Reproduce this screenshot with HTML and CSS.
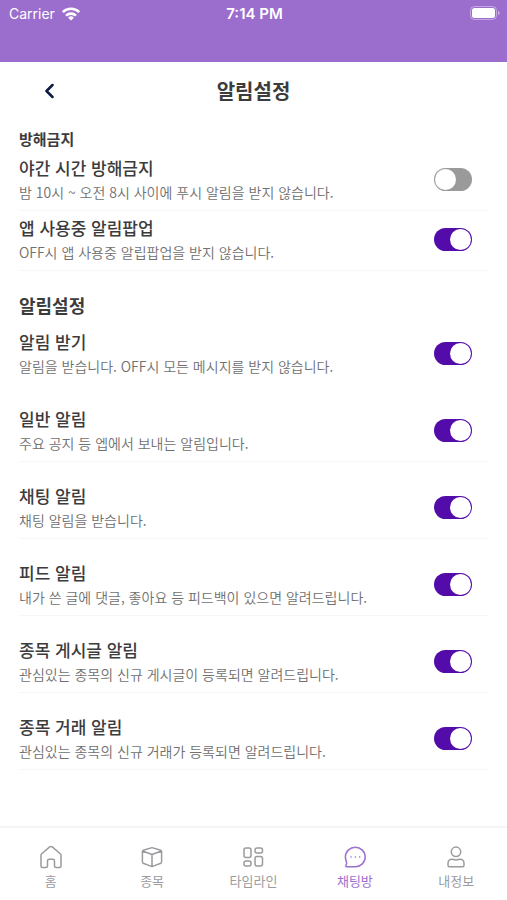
FILE: index.html
```html
<!DOCTYPE html>
<html lang="ko">
<head>
<meta charset="utf-8">
<meta name="viewport" content="width=device-width, initial-scale=1">
<title>알림설정</title>
<link rel="stylesheet" href="styles.css">
</head>
<body>
<div class="status-bar">
  <span class="carrier">Carrier
    <svg width="20" height="16" viewBox="0 0 20 16" fill="none" stroke="currentColor" stroke-width="2.6" aria-hidden="true"><path d="M1.8 6.2a11.6 11.6 0 0 1 16.4 0M5 9.7a7.1 7.1 0 0 1 10 0"/><path d="M10 14.6 7.1 11.7a4.1 4.1 0 0 1 5.8 0z" fill="currentColor" stroke="none"/></svg>
  </span>
  <span class="clock">7:14 PM</span>
  <svg class="battery" width="30" height="14" viewBox="0 0 30 14" aria-hidden="true"><rect x=".5" y=".5" width="26" height="13" rx="4" fill="none" stroke="#fff" stroke-opacity=".4"/><rect x="2" y="2" width="23" height="10" rx="2.5" fill="#fff"/><path d="M28 5v4c1-.4 1.600-1.100 1.600-2S29 5.400 28 5z" fill="#fff" fill-opacity=".5"/></svg>
</div>
<header class="header">
  <button class="back" type="button" aria-label="뒤로"><svg width="10" height="16" viewBox="0 0 10 16" fill="none" stroke="currentColor" stroke-width="2.500" stroke-linecap="round" stroke-linejoin="round"><path d="M8.500 2 2.500 8l6 6"/></svg></button>
  <h1>알림설정</h1>
</header>
<main class="settings">
  <section class="group compact">
    <h2>방해금지</h2>
    <div class="row"><label for="night">야간 시간 방해금지<small>밤 10시 ~ 오전 8시 사이에 푸시 알림을 받지 않습니다.</small></label><input class="toggle" id="night" type="checkbox"></div>
    <div class="row"><label for="popup">앱 사용중 알림팝업<small>OFF시 앱 사용중 알립팝업을 받지 않습니다.</small></label><input class="toggle" id="popup" type="checkbox" checked></div>
  </section>
  <section class="group">
    <h2>알림설정</h2>
    <div class="row master"><label for="all">알림 받기<small>알림을 받습니다. OFF시 모든 메시지를 받지 않습니다.</small></label><input class="toggle" id="all" type="checkbox" checked></div>
    <div class="row"><label for="general">일반 알림<small>주요 공지 등 엡에서 보내는 알림입니다.</small></label><input class="toggle" id="general" type="checkbox" checked></div>
    <div class="row"><label for="chat">채팅 알림<small>채팅 알림을 받습니다.</small></label><input class="toggle" id="chat" type="checkbox" checked></div>
    <div class="row"><label for="feed">피드 알림<small>내가 쓴 글에 댓글, 좋아요 등 피드백이 있으면 알려드립니다.</small></label><input class="toggle" id="feed" type="checkbox" checked></div>
    <div class="row"><label for="post">종목 게시글 알림<small>관심있는 종목의 신규 게시글이 등록되면 알려드립니다.</small></label><input class="toggle" id="post" type="checkbox" checked></div>
    <div class="row"><label for="trade">종목 거래 알림<small>관심있는 종목의 신규 거래가 등록되면 알려드립니다.</small></label><input class="toggle" id="trade" type="checkbox" checked></div>
  </section>
</main>
<nav class="tabs">
  <a href="#home"><svg viewBox="0 0 24 24"><path d="M2 10.200c0-.6.300-1.100.700-1.500l8-6.800c.8-.6 1.800-.6 2.600 0l8 6.800c.4.4.7.900.7 1.500V21c0 .9-.6 1.500-1.500 1.500H17c-.9 0-1.500-.6-1.500-1.500v-5c0-1-.7-1.700-1.700-1.700h-3.600c-1 0-1.700.7-1.700 1.700v5c0 .9-.6 1.500-1.500 1.500H3.500c-.9 0-1.500-.6-1.500-1.500z"/></svg>홈</a>
  <a href="#stocks"><svg viewBox="0 0 24 24"><path d="m12 2.600 8.700 2.700c.6.200.9.600.9 1.100v10.700c0 .5-.3.900-.8 1.100L12 21.600l-8.800-3.400c-.5-.2-.8-.6-.8-1.100V6.400c0-.5.300-.9.900-1.100zM2.600 6l9.400 3.500L21.400 6M12 9.500v12"/></svg>종목</a>
  <a href="#timeline"><svg viewBox="0 0 24 24"><rect x="3" y="3" width="7" height="9.500" rx="2"/><rect x="14" y="3" width="7.500" height="5" rx="2"/><rect x="3" y="16" width="7" height="5" rx="2"/><rect x="14" y="11.500" width="7.500" height="9.500" rx="2"/></svg>타임라인</a>
  <a class="active" href="#chat-rooms" aria-current="page"><svg viewBox="0 0 24 24"><path d="M12.300 2.300c5.500 0 9.900 4.300 9.900 9.700s-4.400 9.700-9.900 9.700H3.500c-.7 0-1-.6-.6-1.100.7-1.100 1-2.100.6-3.600-.7-1.500-1.100-3.200-1.100-5 0-5.400 4.400-9.700 9.900-9.700z"/><path d="M8 12h.1M12.300 12h.1M16.600 12h.1"/></svg>채팅방</a>
  <a href="#me"><svg viewBox="0 0 24 24"><circle cx="12" cy="6.800" r="4.700"/><path d="M8 14.200c1.300 0 2.300.8 4 .8s2.700-.8 4-.8c2.300 0 4 1.800 4 4v2c0 .9-.7 1.500-1.500 1.500h-13c-.8 0-1.500-.6-1.500-1.500v-2c0-2.200 1.700-4 4-4z"/></svg>내정보</a>
</nav>
</body>
</html>
```
FILE: styles.css
```css
* {
  box-sizing: border-box;
}

body {
  margin: 0;
  min-height: 100vh;
  display: flex;
  flex-direction: column;
  background: #fff;
  color: #3c3c3c;
  font-family: "Noto Sans CJK KR", sans-serif;
}

h1,
h2 {
  margin: 0;
  font-weight: 700;
}

.status-bar {
  display: grid;
  grid-template-columns: 1fr auto 1fr;
  align-items: start;
  height: 62px;
  padding: 4px 7px 0 9px;
  background: #9b6dcd;
  color: #fff;
  font: 14px/20px Inter, sans-serif;
}

.carrier {
  display: flex;
  align-items: center;
  gap: 6px;
  height: 20px;
}

.clock {
  font-size: 15px;
  font-weight: 600;
}

.battery {
  justify-self: end;
  margin-top: 2px;
}

.header {
  display: grid;
  grid-template-columns: 1fr auto 1fr;
  align-items: center;
  height: 58px;
  padding: 0 19px;
}

.header h1 {
  font-size: 20px;
  line-height: 26px;
}

.back {
  display: flex;
  justify-self: start;
  margin-left: 17px;
  padding: 8px;
  border: 0;
  background: none;
  color: #0b1b42;
}

.settings {
  flex: 1;
  padding: 7px 19px 0;
}

.group h2 {
  margin: 22px 0 12px;
  font-size: 18px;
  line-height: 24px;
}

.group.compact h2 {
  margin: 0;
  font-size: 15px;
  line-height: 23px;
}

.row {
  display: flex;
  align-items: center;
  justify-content: space-between;
  padding: 21px 16px 6px 0;
  border-bottom: 1px solid #f7f7f7;
}

.compact .row {
  padding-top: 4px;
}

.compact h2 + .row {
  padding-top: 5px;
}

.row.master {
  padding-top: 0;
  border-color: transparent;
}

.row label {
  font-size: 17px;
  font-weight: 500;
  line-height: 25px;
}

.row small {
  display: block;
  color: #707070;
  font-size: 14px;
  font-weight: 350;
  line-height: 24px;
}

.toggle {
  appearance: none;
  flex: none;
  width: 38px;
  height: 23px;
  margin: 0;
  padding: 1px;
  border-radius: 12px;
  background: #9a9a9a;
}

.toggle::before {
  content: "";
  display: block;
  width: 21px;
  height: 21px;
  border-radius: 50%;
  background: #fff;
}

.toggle:checked {
  background: #530ba9;
}

.toggle:checked::before {
  margin-left: auto;
}

.tabs {
  display: grid;
  grid-template-columns: repeat(5, 1fr);
  height: 74px;
  padding-top: 17px;
  border-top: 2px solid #f5f5f5;
}

.tabs a {
  display: flex;
  flex-direction: column;
  align-items: center;
  gap: 2px;
  color: #9b9b9f;
  font-size: 13px;
  line-height: 20px;
  text-decoration: none;
}

.tabs .active {
  color: #9b70d0;
}

.tabs svg {
  width: 24px;
  height: 24px;
  fill: none;
  stroke: currentColor;
  stroke-width: 1.5;
  stroke-linecap: round;
  stroke-linejoin: round;
}
```
